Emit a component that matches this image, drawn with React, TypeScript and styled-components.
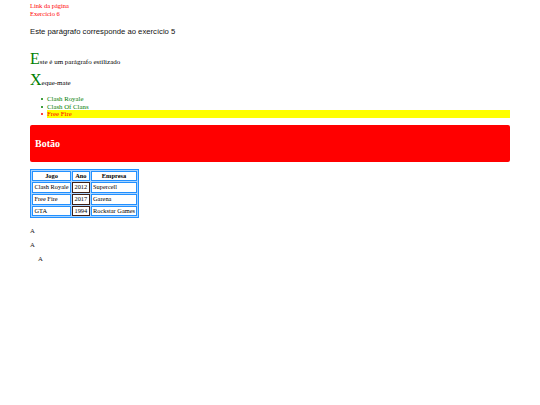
import React from 'react';
import styled, { createGlobalStyle } from 'styled-components';

const GlobalStyle = createGlobalStyle`
    html, body {
        margin: 0;
        padding: 0;
        background: #ffffff;
    }
    body {
        font-family: "Liberation Serif", "Times New Roman", serif;
        color: #000000;
    }
`;

const StPage = styled.div`
    padding: 2px 30px 20px;
`;

const StLinks = styled.nav`
    font-size: 6.5px;
    line-height: 8px;

    a {
        display: block;
        color: #ff0000;
        text-decoration: none;
    }
`;

const StIntro = styled.p`
    margin: 8.5px 0 0;
    font-family: "Liberation Sans", Arial, sans-serif;
    font-size: 7.7px;
    line-height: 9px;
    color: #111111;
`;

const StFancy = styled.p<{ $top: number }>`
    margin: ${({ $top }) => $top}px 0 0;
    font-size: 7px;
    line-height: 1.15;

    &::first-letter {
        font-size: 16px;
        color: #008000;
    }
`;

const StGameList = styled.ul`
    margin: 6px 0 0;
    padding-left: 17px;
    list-style: none;
`;

const StGameItem = styled.li<{ $highlight?: boolean }>`
    font-size: 6.8px;
    line-height: 7.5px;
    color: ${({ $highlight }) => ($highlight ? '#ff0000' : '#008000')};
    background: ${({ $highlight }) => ($highlight ? '#ffff00' : 'transparent')};

    &::before {
        content: '';
        display: inline-block;
        width: 2px;
        height: 2px;
        margin-left: -6.5px;
        margin-right: 4.5px;
        vertical-align: 1px;
        border-radius: 50%;
        background: currentColor;
    }
`;

const StButton = styled.button`
    display: block;
    width: 100%;
    height: 37px;
    margin-top: 7px;
    padding: 0 5px;
    border: none;
    border-radius: 2px;
    background: #ff0000;
    color: #ffffff;
    font-family: "Liberation Serif", "Times New Roman", serif;
    font-size: 10px;
    font-weight: bold;
    text-align: left;
`;

const StTable = styled.table`
    margin-top: 7px;
    border: 1px solid #2290ff;
    border-collapse: separate;
    border-spacing: 1px;
    background: #a9d4ff;
    font-size: 6.4px;
`;

const StCell = styled.td<{ $year?: boolean }>`
    padding: 0 1.4px;
    line-height: 8.6px;
    background: #ffffff;
    border: 1px solid ${({ $year }) => ($year ? '#3e2018' : '#2290ff')};
    white-space: nowrap;
`;

const StHead = styled.th`
    padding: 0 1.4px;
    line-height: 8.6px;
    background: #ffffff;
    border: 1px solid #2290ff;
    font-weight: bold;
    text-align: center;
    white-space: nowrap;
`;

const StLetter = styled.p<{ $indent?: boolean }>`
    margin: 6.5px 0 0;
    padding-left: ${({ $indent }) => ($indent ? '8px' : '0')};
    font-size: 6.7px;
    line-height: 7.5px;
    color: #222222;

    &:first-of-type {
        margin-top: 8.5px;
    }
`;

const games = [
    { name: 'Clash Royale', year: '2012', company: 'Supercell' },
    { name: 'Free Fire', year: '2017', company: 'Garena' },
    { name: 'GTA', year: '1994', company: 'Rockstar Games' },
];

const App = () => {
    return (
        <StPage>
            <GlobalStyle />
            <StLinks>
                <a href="#">Link da página</a>
                <a href="#">Exercício 6</a>
            </StLinks>
            <StIntro>Este parágrafo corresponde ao exercício 5</StIntro>
            <StFancy $top={14}>Este é um parágrafo estilizado</StFancy>
            <StFancy $top={3}>Xeque-mate</StFancy>
            <StGameList>
                <StGameItem>Clash Royale</StGameItem>
                <StGameItem>Clash Of Clans</StGameItem>
                <StGameItem $highlight>Free Fire</StGameItem>
            </StGameList>
            <StButton>Botão</StButton>
            <StTable>
                <thead>
                    <tr>
                        <StHead>Jogo</StHead>
                        <StHead>Ano</StHead>
                        <StHead>Empresa</StHead>
                    </tr>
                </thead>
                <tbody>
                    {games.map((game) => (
                        <tr key={game.name}>
                            <StCell>{game.name}</StCell>
                            <StCell $year>{game.year}</StCell>
                            <StCell>{game.company}</StCell>
                        </tr>
                    ))}
                </tbody>
            </StTable>
            <div>
                <StLetter>A</StLetter>
                <StLetter>A</StLetter>
                <StLetter $indent>A</StLetter>
            </div>
        </StPage>
    );
};

export default App;
